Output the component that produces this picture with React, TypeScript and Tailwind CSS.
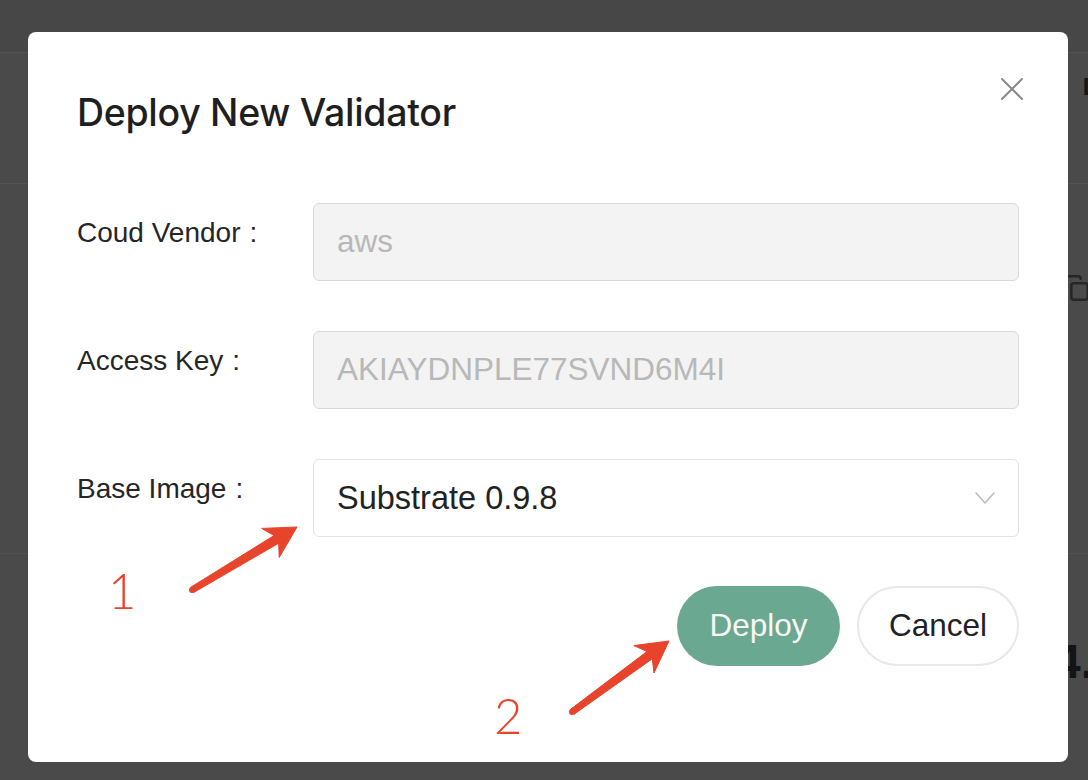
import { Copy } from "lucide-react";

type Pt = [number, number];

// polygon for a hand-drawn annotation arrow (screenshot markup style)
function arrowPath(tail: Pt, tip: Pt, headLen = 31, headHalf = 17) {
  const dx = tip[0] - tail[0];
  const dy = tip[1] - tail[1];
  const len = Math.hypot(dx, dy);
  const ux = dx / len;
  const uy = dy / len;
  const nx = -uy;
  const ny = ux;
  const base: Pt = [tip[0] - ux * headLen, tip[1] - uy * headLen];
  const notch: Pt = [tip[0] - ux * (headLen - 7), tip[1] - uy * (headLen - 7)];
  const tw = 3;
  const hw = 4.5;
  const p = (x: number, y: number) => `${x.toFixed(1)},${y.toFixed(1)}`;
  return [
    p(tail[0] + nx * tw, tail[1] + ny * tw),
    p(notch[0] + nx * hw, notch[1] + ny * hw),
    p(base[0] + nx * headHalf, base[1] + ny * headHalf),
    p(tip[0], tip[1]),
    p(base[0] - nx * headHalf, base[1] - ny * headHalf),
    p(notch[0] - nx * hw, notch[1] - ny * hw),
    p(tail[0] - nx * tw, tail[1] - ny * tw),
  ].join(" ");
}

function Backdrop() {
  return (
    <div className="flex h-full w-full flex-col">
      <div className="h-[52px] bg-[#474747]" />
      <div className="flex h-[131px] items-start justify-end border-t border-[#525252] pt-[22px]">
        <span className="mr-[-12px] text-[24px] font-bold leading-none text-[#161616]">D</span>
      </div>
      <div className="flex h-[370px] items-start justify-end border-t border-[#525252] pt-[90px]">
        <Copy className="mr-[-2px] h-[28px] w-[28px] text-[#262626]" strokeWidth={2.2} />
      </div>
      <div className="flex flex-1 items-start justify-end border-t border-[#525252] pt-[84px]">
        <span className="mr-[-6px] text-[48px] font-bold leading-none text-[#141414]">4.</span>
      </div>
    </div>
  );
}

export default function App() {
  return (
    <div className="relative h-[780px] w-[1088px] overflow-hidden bg-[#4a4a4a] font-['Liberation_Sans',Arial,sans-serif]">
      <Backdrop />

      {/* modal */}
      <div className="absolute inset-0 pl-[28px] pt-[32px]">
        <div className="relative flex h-[730px] w-[1040px] flex-col rounded-[8px] bg-white px-[49px] pt-[59px]">
          <h1 className="font-['Inter',sans-serif] text-[37.5px] font-medium leading-[44px] tracking-[-0.3px] text-[#1f1f1f]">
            Deploy New Validator
          </h1>
          <button className="absolute right-[45px] top-[46px] h-[22px] w-[22px]">
            <svg viewBox="0 0 22 22" className="h-[22px] w-[22px]" stroke="#8a8a8a" strokeWidth="2" strokeLinecap="round">
              <line x1="1" y1="1" x2="21" y2="21" />
              <line x1="21" y1="1" x2="1" y2="21" />
            </svg>
          </button>

          <div className="mt-[68px] flex flex-col gap-[50px]">
            <div className="flex">
              <label className="w-[236px] pt-[14px] text-[28px] leading-[32px] text-[#262626]">
                Coud Vendor<span className="ml-[9px]">:</span>
              </label>
              <div className="flex h-[78px] flex-1 items-center rounded-[6px] border border-[#d9d9d9] bg-[#f3f3f3] pl-[23px] text-[31.5px] text-[#b8b8b8]">
                aws
              </div>
            </div>
            <div className="flex">
              <label className="w-[236px] pt-[14px] text-[28px] leading-[32px] text-[#262626]">
                Access Key<span className="ml-[9px]">:</span>
              </label>
              <div className="flex h-[78px] flex-1 items-center rounded-[6px] border border-[#d9d9d9] bg-[#f3f3f3] pl-[23px] text-[31.5px] text-[#b8b8b8]">
                AKIAYDNPLE77SVND6M4I
              </div>
            </div>
            <div className="flex">
              <label className="w-[236px] pt-[14px] text-[28px] leading-[32px] text-[#262626]">
                Base Image<span className="ml-[9px]">:</span>
              </label>
              <div className="flex h-[78px] flex-1 items-center justify-between rounded-[6px] border border-[#e3e3e3] bg-white pl-[23px] pr-[23px] text-[32.5px] text-[#222222]">
                <span>Substrate 0.9.8</span>
                <svg viewBox="0 0 20 12" className="h-[12px] w-[20px]" fill="none" stroke="#bdbdbd" strokeWidth="1.6" strokeLinecap="round" strokeLinejoin="round">
                  <polyline points="1,1 10,11 19,1" />
                </svg>
              </div>
            </div>
          </div>

          <div className="mt-[49px] flex justify-end gap-[17px]">
            <button className="h-[80px] w-[163px] rounded-full bg-[#6aa891] text-[31.5px] text-[#f7f7f7]">
              Deploy
            </button>
            <button className="h-[80px] w-[162px] rounded-full border-2 border-[#e8e8e8] bg-white text-[31.5px] text-[#222222]">
              Cancel
            </button>
          </div>
        </div>
      </div>

      {/* red markup annotations */}
      <svg className="pointer-events-none absolute inset-0" width="1088" height="780" viewBox="0 0 1088 780">
        <polygon points={arrowPath([192, 590], [297, 527])} fill="#e8432b" strokeLinejoin="round" stroke="#e8432b" strokeWidth="1" />
        <circle cx="192" cy="590" r="3" fill="#e8432b" />
        <polygon points={arrowPath([572, 712], [669, 641])} fill="#e8432b" strokeLinejoin="round" stroke="#e8432b" strokeWidth="1" />
        <circle cx="572" cy="712" r="3" fill="#e8432b" />
      </svg>
      <span className="pointer-events-none absolute left-[108px] top-[566px] font-['Lato',sans-serif] text-[49px] font-light leading-none text-[#e8432b]">
        1
      </span>
      <span className="pointer-events-none absolute left-[494px] top-[691px] font-['Lato',sans-serif] text-[49px] font-light leading-none text-[#e8432b]">
        2
      </span>
    </div>
  );
}
